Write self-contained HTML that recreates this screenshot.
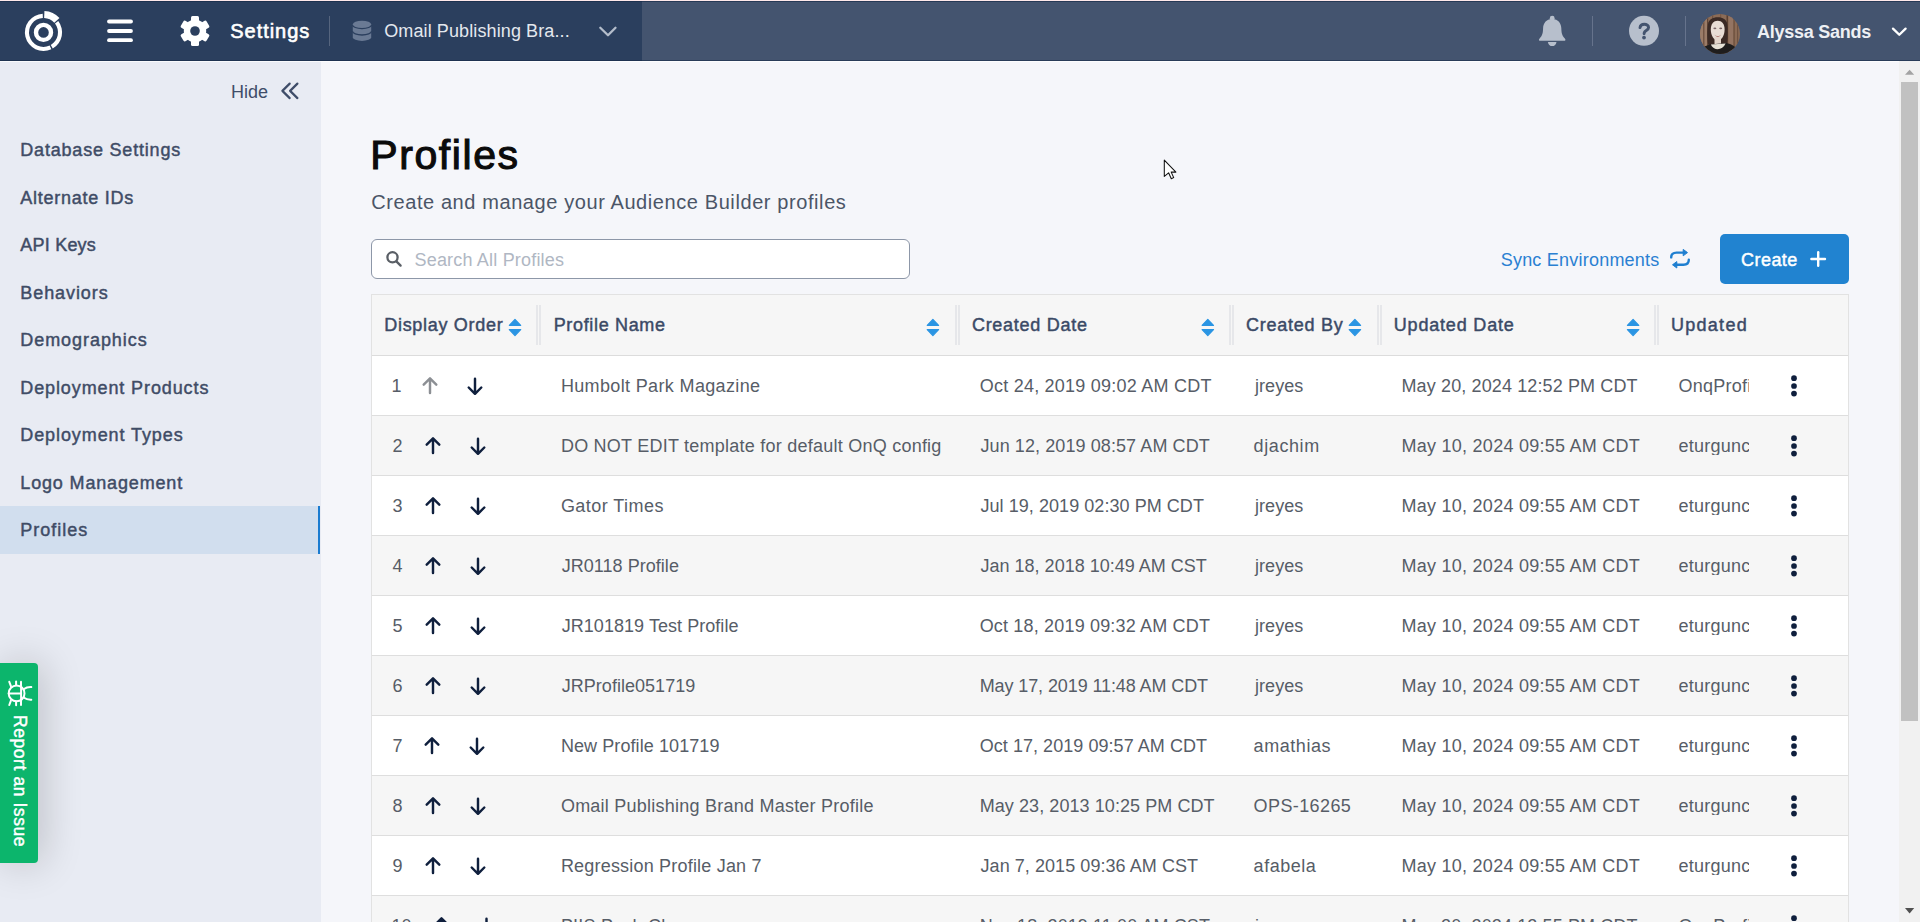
<!DOCTYPE html>
<html><head><meta charset="utf-8"><style>
*{box-sizing:border-box}
html,body{margin:0;padding:0;width:1920px;height:922px;overflow:hidden;background:#f5f6fa;font-family:"Liberation Sans", sans-serif}
.t{position:absolute;white-space:nowrap}
.a{position:absolute}
</style></head><body>
<div class="a" style="left:0;top:0;width:1920px;height:1px;background:#ffe9ea"></div><div class="a" style="left:0;top:1px;width:642px;height:60px;background:#2b3f5e"></div><div class="a" style="left:642px;top:1px;width:1278px;height:60px;background:#44546f"></div><div class="a" style="left:0;top:1px;width:1920px;height:1px;background:rgba(20,40,70,.6)"></div><div class="a" style="left:0;top:60px;width:1920px;height:1px;background:rgba(20,40,70,.55)"></div><div class="a" style="left:0;top:61px;width:321px;height:861px;background:#e8ebf3"></div><div class="a" style="left:0;top:61px;width:1920px;height:1px;background:rgba(255,255,255,.75)"></div><div class="t" style="left:230.3px;top:21.07px;font-size:20px;line-height:20px;color:#fff;font-weight:400;-webkit-text-stroke:0.6px #fff;letter-spacing:0.95px">Settings</div>
<div class="a" style="left:329px;top:16px;width:1px;height:30px;background:#56657e"></div><div class="t" style="left:384.2px;top:21.96px;font-size:18px;line-height:18px;color:#e4e8ee;font-weight:400;letter-spacing:0.11px">Omail Publishing Bra...</div>
<div class="t" style="left:1757px;top:23.06px;font-size:18px;line-height:18px;color:#eef0f4;font-weight:700;letter-spacing:-0.25px">Alyssa Sands</div>
<div class="a" style="left:1592px;top:16px;width:1px;height:30px;background:#66738c"></div><div class="a" style="left:1685px;top:16px;width:1px;height:30px;background:#66738c"></div><div class="t" style="left:231px;top:82.56px;font-size:18px;line-height:18px;color:#3f4d69;font-weight:400;">Hide</div>
<div class="a" style="left:0;top:506px;width:320px;height:48px;background:#d1deee"></div><div class="a" style="left:318px;top:506px;width:2px;height:48px;background:#1a7bd0"></div><div class="t" style="left:20.3px;top:141.06px;font-size:18px;line-height:18px;color:#3f4c66;font-weight:400;-webkit-text-stroke:0.45px #3f4c66;letter-spacing:0.8px">Database Settings</div>
<div class="t" style="left:20.3px;top:188.56px;font-size:18px;line-height:18px;color:#3f4c66;font-weight:400;-webkit-text-stroke:0.45px #3f4c66;letter-spacing:0.75px">Alternate IDs</div>
<div class="t" style="left:20.3px;top:236.06px;font-size:18px;line-height:18px;color:#3f4c66;font-weight:400;-webkit-text-stroke:0.45px #3f4c66;letter-spacing:0.214px">API Keys</div>
<div class="t" style="left:20.3px;top:283.56px;font-size:18px;line-height:18px;color:#3f4c66;font-weight:400;-webkit-text-stroke:0.45px #3f4c66;letter-spacing:0.912px">Behaviors</div>
<div class="t" style="left:20.3px;top:331.06px;font-size:18px;line-height:18px;color:#3f4c66;font-weight:400;-webkit-text-stroke:0.45px #3f4c66;letter-spacing:0.936px">Demographics</div>
<div class="t" style="left:20.3px;top:378.56px;font-size:18px;line-height:18px;color:#3f4c66;font-weight:400;-webkit-text-stroke:0.45px #3f4c66;letter-spacing:0.889px">Deployment Products</div>
<div class="t" style="left:20.3px;top:426.06px;font-size:18px;line-height:18px;color:#3f4c66;font-weight:400;-webkit-text-stroke:0.45px #3f4c66;letter-spacing:0.907px">Deployment Types</div>
<div class="t" style="left:20.3px;top:473.56px;font-size:18px;line-height:18px;color:#3f4c66;font-weight:400;-webkit-text-stroke:0.45px #3f4c66;letter-spacing:0.843px">Logo Management</div>
<div class="t" style="left:20.3px;top:521.06px;font-size:18px;line-height:18px;color:#3f4c66;font-weight:400;-webkit-text-stroke:0.45px #3f4c66;letter-spacing:1.0px">Profiles</div>
<div class="t" style="left:370.3px;top:135.09px;font-size:41px;line-height:41px;color:#0b0b0b;font-weight:400;-webkit-text-stroke:1.1px #0b0b0b;letter-spacing:1.571px">Profiles</div>
<div class="t" style="left:371.2px;top:191.87px;font-size:20px;line-height:20px;color:#4b5567;font-weight:400;letter-spacing:0.59px">Create and manage your Audience Builder profiles</div>
<div class="a" style="left:371px;top:239px;width:539px;height:40px;background:#fff;border:1px solid #8d97a8;border-radius:6px"></div><div class="t" style="left:414.5px;top:251.06px;font-size:18px;line-height:18px;color:#b0b7c3;font-weight:400;letter-spacing:0.19px">Search All Profiles</div>
<div class="t" style="left:1500.7px;top:250.96px;font-size:18px;line-height:18px;color:#2a80d2;font-weight:400;letter-spacing:0.22px">Sync Environments</div>
<div class="a" style="left:1720px;top:234px;width:129px;height:50px;background:#2183d0;border-radius:5px"></div><div class="t" style="left:1741px;top:250.96px;font-size:18px;line-height:18px;color:#fff;font-weight:400;-webkit-text-stroke:0.45px #fff;letter-spacing:0.46px">Create</div>
<div class="a" style="left:371px;top:294px;width:1478px;height:700px;background:#fff;border:1px solid #e2e2e2"></div><div class="a" style="left:372px;top:295px;width:1476px;height:60px;background:#f6f6f6"></div><div class="a" style="left:372px;top:355px;width:1476px;height:1px;background:#dcdcdc"></div><div class="a" style="left:372px;top:356px;width:1476px;height:59px;background:#fff"></div><div class="a" style="left:372px;top:415px;width:1476px;height:1px;background:#dedede"></div><div class="t" style="left:391.5px;top:376.56px;font-size:18px;line-height:18px;color:#575d67;font-weight:400;">1</div>
<div class="t" style="left:560.9px;top:376.56px;font-size:18px;line-height:18px;color:#575d67;font-weight:400;letter-spacing:0.355px">Humbolt Park Magazine</div>
<div class="t" style="left:979.7px;top:376.56px;font-size:18px;line-height:18px;color:#575d67;font-weight:400;letter-spacing:0.237px">Oct 24, 2019 09:02 AM CDT</div>
<div class="t" style="left:1255.0px;top:376.56px;font-size:18px;line-height:18px;color:#575d67;font-weight:400;letter-spacing:0.06px">jreyes</div>
<div class="t" style="left:1401.5px;top:376.56px;font-size:18px;line-height:18px;color:#575d67;font-weight:400;letter-spacing:0.125px">May 20, 2024 12:52 PM CDT</div>
<div class="t" style="left:1678.5px;top:376.56px;font-size:18px;line-height:18px;color:#575d67;font-weight:400;width:70.5px;overflow:hidden;letter-spacing:0.25px">OnqProfi</div>
<div class="a" style="left:372px;top:416px;width:1476px;height:59px;background:#f6f6f6"></div><div class="a" style="left:372px;top:475px;width:1476px;height:1px;background:#dedede"></div><div class="t" style="left:392.5px;top:436.56px;font-size:18px;line-height:18px;color:#575d67;font-weight:400;">2</div>
<div class="t" style="left:560.9px;top:436.56px;font-size:18px;line-height:18px;color:#575d67;font-weight:400;letter-spacing:0.238px">DO NOT EDIT template for default OnQ config</div>
<div class="t" style="left:980.5px;top:436.56px;font-size:18px;line-height:18px;color:#575d67;font-weight:400;letter-spacing:0.087px">Jun 12, 2019 08:57 AM CDT</div>
<div class="t" style="left:1253.6px;top:436.56px;font-size:18px;line-height:18px;color:#575d67;font-weight:400;letter-spacing:0.6px">djachim</div>
<div class="t" style="left:1401.5px;top:436.56px;font-size:18px;line-height:18px;color:#575d67;font-weight:400;letter-spacing:0.258px">May 10, 2024 09:55 AM CDT</div>
<div class="t" style="left:1678.5px;top:436.56px;font-size:18px;line-height:18px;color:#575d67;font-weight:400;width:70.5px;overflow:hidden;letter-spacing:0.25px">eturgunc</div>
<div class="a" style="left:372px;top:476px;width:1476px;height:59px;background:#fff"></div><div class="a" style="left:372px;top:535px;width:1476px;height:1px;background:#dedede"></div><div class="t" style="left:392.5px;top:496.56px;font-size:18px;line-height:18px;color:#575d67;font-weight:400;">3</div>
<div class="t" style="left:560.9px;top:496.56px;font-size:18px;line-height:18px;color:#575d67;font-weight:400;letter-spacing:0.45px">Gator Times</div>
<div class="t" style="left:980.5px;top:496.56px;font-size:18px;line-height:18px;color:#575d67;font-weight:400;letter-spacing:0.054px">Jul 19, 2019 02:30 PM CDT</div>
<div class="t" style="left:1255.0px;top:496.56px;font-size:18px;line-height:18px;color:#575d67;font-weight:400;letter-spacing:0.06px">jreyes</div>
<div class="t" style="left:1401.5px;top:496.56px;font-size:18px;line-height:18px;color:#575d67;font-weight:400;letter-spacing:0.258px">May 10, 2024 09:55 AM CDT</div>
<div class="t" style="left:1678.5px;top:496.56px;font-size:18px;line-height:18px;color:#575d67;font-weight:400;width:70.5px;overflow:hidden;letter-spacing:0.25px">eturgunc</div>
<div class="a" style="left:372px;top:536px;width:1476px;height:59px;background:#f6f6f6"></div><div class="a" style="left:372px;top:595px;width:1476px;height:1px;background:#dedede"></div><div class="t" style="left:392.5px;top:556.56px;font-size:18px;line-height:18px;color:#575d67;font-weight:400;">4</div>
<div class="t" style="left:561.6999999999999px;top:556.56px;font-size:18px;line-height:18px;color:#575d67;font-weight:400;letter-spacing:0.038px">JR0118 Profile</div>
<div class="t" style="left:980.5px;top:556.56px;font-size:18px;line-height:18px;color:#575d67;font-weight:400;letter-spacing:0.008px">Jan 18, 2018 10:49 AM CST</div>
<div class="t" style="left:1255.0px;top:556.56px;font-size:18px;line-height:18px;color:#575d67;font-weight:400;letter-spacing:0.06px">jreyes</div>
<div class="t" style="left:1401.5px;top:556.56px;font-size:18px;line-height:18px;color:#575d67;font-weight:400;letter-spacing:0.258px">May 10, 2024 09:55 AM CDT</div>
<div class="t" style="left:1678.5px;top:556.56px;font-size:18px;line-height:18px;color:#575d67;font-weight:400;width:70.5px;overflow:hidden;letter-spacing:0.25px">eturgunc</div>
<div class="a" style="left:372px;top:596px;width:1476px;height:59px;background:#fff"></div><div class="a" style="left:372px;top:655px;width:1476px;height:1px;background:#dedede"></div><div class="t" style="left:392.5px;top:616.56px;font-size:18px;line-height:18px;color:#575d67;font-weight:400;">5</div>
<div class="t" style="left:561.6999999999999px;top:616.56px;font-size:18px;line-height:18px;color:#575d67;font-weight:400;letter-spacing:0.05px">JR101819 Test Profile</div>
<div class="t" style="left:979.7px;top:616.56px;font-size:18px;line-height:18px;color:#575d67;font-weight:400;letter-spacing:0.171px">Oct 18, 2019 09:32 AM CDT</div>
<div class="t" style="left:1255.0px;top:616.56px;font-size:18px;line-height:18px;color:#575d67;font-weight:400;letter-spacing:0.06px">jreyes</div>
<div class="t" style="left:1401.5px;top:616.56px;font-size:18px;line-height:18px;color:#575d67;font-weight:400;letter-spacing:0.258px">May 10, 2024 09:55 AM CDT</div>
<div class="t" style="left:1678.5px;top:616.56px;font-size:18px;line-height:18px;color:#575d67;font-weight:400;width:70.5px;overflow:hidden;letter-spacing:0.25px">eturgunc</div>
<div class="a" style="left:372px;top:656px;width:1476px;height:59px;background:#f6f6f6"></div><div class="a" style="left:372px;top:715px;width:1476px;height:1px;background:#dedede"></div><div class="t" style="left:392.5px;top:676.56px;font-size:18px;line-height:18px;color:#575d67;font-weight:400;">6</div>
<div class="t" style="left:561.6999999999999px;top:676.56px;font-size:18px;line-height:18px;color:#575d67;font-weight:400;letter-spacing:0.036px">JRProfile051719</div>
<div class="t" style="left:979.7px;top:676.56px;font-size:18px;line-height:18px;color:#575d67;font-weight:400;letter-spacing:-0.1px">May 17, 2019 11:48 AM CDT</div>
<div class="t" style="left:1255.0px;top:676.56px;font-size:18px;line-height:18px;color:#575d67;font-weight:400;letter-spacing:0.06px">jreyes</div>
<div class="t" style="left:1401.5px;top:676.56px;font-size:18px;line-height:18px;color:#575d67;font-weight:400;letter-spacing:0.258px">May 10, 2024 09:55 AM CDT</div>
<div class="t" style="left:1678.5px;top:676.56px;font-size:18px;line-height:18px;color:#575d67;font-weight:400;width:70.5px;overflow:hidden;letter-spacing:0.25px">eturgunc</div>
<div class="a" style="left:372px;top:716px;width:1476px;height:59px;background:#fff"></div><div class="a" style="left:372px;top:775px;width:1476px;height:1px;background:#dedede"></div><div class="t" style="left:392.5px;top:736.56px;font-size:18px;line-height:18px;color:#575d67;font-weight:400;">7</div>
<div class="t" style="left:560.9px;top:736.56px;font-size:18px;line-height:18px;color:#575d67;font-weight:400;letter-spacing:0.088px">New Profile 101719</div>
<div class="t" style="left:979.7px;top:736.56px;font-size:18px;line-height:18px;color:#575d67;font-weight:400;letter-spacing:0.05px">Oct 17, 2019 09:57 AM CDT</div>
<div class="t" style="left:1253.6px;top:736.56px;font-size:18px;line-height:18px;color:#575d67;font-weight:400;letter-spacing:0.557px">amathias</div>
<div class="t" style="left:1401.5px;top:736.56px;font-size:18px;line-height:18px;color:#575d67;font-weight:400;letter-spacing:0.258px">May 10, 2024 09:55 AM CDT</div>
<div class="t" style="left:1678.5px;top:736.56px;font-size:18px;line-height:18px;color:#575d67;font-weight:400;width:70.5px;overflow:hidden;letter-spacing:0.25px">eturgunc</div>
<div class="a" style="left:372px;top:776px;width:1476px;height:59px;background:#f6f6f6"></div><div class="a" style="left:372px;top:835px;width:1476px;height:1px;background:#dedede"></div><div class="t" style="left:392.5px;top:796.56px;font-size:18px;line-height:18px;color:#575d67;font-weight:400;">8</div>
<div class="t" style="left:560.9px;top:796.56px;font-size:18px;line-height:18px;color:#575d67;font-weight:400;letter-spacing:0.236px">Omail Publishing Brand Master Profile</div>
<div class="t" style="left:979.7px;top:796.56px;font-size:18px;line-height:18px;color:#575d67;font-weight:400;letter-spacing:0.075px">May 23, 2013 10:25 PM CDT</div>
<div class="t" style="left:1253.6px;top:796.56px;font-size:18px;line-height:18px;color:#575d67;font-weight:400;letter-spacing:0.4px">OPS-16265</div>
<div class="t" style="left:1401.5px;top:796.56px;font-size:18px;line-height:18px;color:#575d67;font-weight:400;letter-spacing:0.258px">May 10, 2024 09:55 AM CDT</div>
<div class="t" style="left:1678.5px;top:796.56px;font-size:18px;line-height:18px;color:#575d67;font-weight:400;width:70.5px;overflow:hidden;letter-spacing:0.25px">eturgunc</div>
<div class="a" style="left:372px;top:836px;width:1476px;height:59px;background:#fff"></div><div class="a" style="left:372px;top:895px;width:1476px;height:1px;background:#dedede"></div><div class="t" style="left:392.5px;top:856.56px;font-size:18px;line-height:18px;color:#575d67;font-weight:400;">9</div>
<div class="t" style="left:560.9px;top:856.56px;font-size:18px;line-height:18px;color:#575d67;font-weight:400;letter-spacing:0.196px">Regression Profile Jan 7</div>
<div class="t" style="left:980.5px;top:856.56px;font-size:18px;line-height:18px;color:#575d67;font-weight:400;letter-spacing:0.061px">Jan 7, 2015 09:36 AM CST</div>
<div class="t" style="left:1253.6px;top:856.56px;font-size:18px;line-height:18px;color:#575d67;font-weight:400;letter-spacing:0.533px">afabela</div>
<div class="t" style="left:1401.5px;top:856.56px;font-size:18px;line-height:18px;color:#575d67;font-weight:400;letter-spacing:0.258px">May 10, 2024 09:55 AM CDT</div>
<div class="t" style="left:1678.5px;top:856.56px;font-size:18px;line-height:18px;color:#575d67;font-weight:400;width:70.5px;overflow:hidden;letter-spacing:0.25px">eturgunc</div>
<div class="a" style="left:372px;top:896px;width:1476px;height:59px;background:#f6f6f6"></div><div class="a" style="left:372px;top:955px;width:1476px;height:1px;background:#dedede"></div><div class="t" style="left:391.5px;top:916.56px;font-size:18px;line-height:18px;color:#575d67;font-weight:400;">10</div>
<div class="t" style="left:560.9px;top:916.56px;font-size:18px;line-height:18px;color:#575d67;font-weight:400;letter-spacing:0.2px">PIIS Push Change</div>
<div class="t" style="left:979.7px;top:916.56px;font-size:18px;line-height:18px;color:#575d67;font-weight:400;letter-spacing:0.1px">Nov 18, 2019 11:00 AM CST</div>
<div class="t" style="left:1255.0px;top:916.56px;font-size:18px;line-height:18px;color:#575d67;font-weight:400;letter-spacing:0.06px">jreyes</div>
<div class="t" style="left:1401.5px;top:916.56px;font-size:18px;line-height:18px;color:#575d67;font-weight:400;letter-spacing:0.125px">May 20, 2024 12:55 PM CDT</div>
<div class="t" style="left:1678.5px;top:916.56px;font-size:18px;line-height:18px;color:#575d67;font-weight:400;width:70.5px;overflow:hidden;letter-spacing:0.25px">OnqProfile</div>
<div class="t" style="left:384.3px;top:316.01px;font-size:18px;line-height:18px;color:#3b4a66;font-weight:400;-webkit-text-stroke:0.45px #3b4a66;letter-spacing:0.692px">Display Order</div>
<div class="t" style="left:553.7px;top:316.01px;font-size:18px;line-height:18px;color:#3b4a66;font-weight:400;-webkit-text-stroke:0.45px #3b4a66;letter-spacing:0.664px">Profile Name</div>
<div class="t" style="left:971.9px;top:316.01px;font-size:18px;line-height:18px;color:#3b4a66;font-weight:400;-webkit-text-stroke:0.45px #3b4a66;letter-spacing:0.736px">Created Date</div>
<div class="t" style="left:1245.9px;top:316.01px;font-size:18px;line-height:18px;color:#3b4a66;font-weight:400;-webkit-text-stroke:0.45px #3b4a66;letter-spacing:0.75px">Created By</div>
<div class="t" style="left:1393.8px;top:316.01px;font-size:18px;line-height:18px;color:#3b4a66;font-weight:400;-webkit-text-stroke:0.45px #3b4a66;letter-spacing:0.809px">Updated Date</div>
<div class="t" style="left:1670.9px;top:316.01px;font-size:18px;line-height:18px;color:#3b4a66;font-weight:400;-webkit-text-stroke:0.45px #3b4a66;letter-spacing:1.3px">Updated</div>
<div class="a" style="left:536px;top:305px;width:2px;height:40px;background:#e6e7ea"></div><div class="a" style="left:539px;top:305px;width:2px;height:40px;background:#e6e7ea"></div><div class="a" style="left:955px;top:305px;width:2px;height:40px;background:#e6e7ea"></div><div class="a" style="left:958px;top:305px;width:2px;height:40px;background:#e6e7ea"></div><div class="a" style="left:1229px;top:305px;width:2px;height:40px;background:#e6e7ea"></div><div class="a" style="left:1232px;top:305px;width:2px;height:40px;background:#e6e7ea"></div><div class="a" style="left:1377px;top:305px;width:2px;height:40px;background:#e6e7ea"></div><div class="a" style="left:1380px;top:305px;width:2px;height:40px;background:#e6e7ea"></div><div class="a" style="left:1654px;top:305px;width:2px;height:40px;background:#e6e7ea"></div><div class="a" style="left:1657px;top:305px;width:2px;height:40px;background:#e6e7ea"></div><div class="a" style="left:0;top:663px;width:38px;height:200px;background:#0cb56c;border-radius:0 4px 4px 0;box-shadow:4px 0 40px rgba(0,0,0,.2)"></div><div class="t" style="left:27.8px;top:715px;transform-origin:0 0;transform:rotate(90deg);font-size:17.5px;line-height:17.5px;color:#fff;font-weight:400;-webkit-text-stroke:0.45px #fff;letter-spacing:0.571px">Report an Issue</div><div class="a" style="left:1899px;top:61px;width:21px;height:861px;background:#f1f1f1"></div><div class="a" style="left:1901px;top:82px;width:17px;height:639px;background:#c1c1c1"></div><svg class="a" style="left:0;top:0" width="1920" height="922" viewBox="0 0 1920 922"><circle cx="43.5" cy="32.4" r="7.5" fill="none" stroke="#fff" stroke-width="4.4"/><path fill="#fff" d="M44.44 10.92 A21.5 21.5 0 0 1 59.48 18.01 L54.28 22.70 A14.5 14.5 0 0 0 44.13 17.91 Z M58.26 21.08 A18.6 18.6 0 0 1 52.80 48.51 L50.75 44.96 A14.5 14.5 0 0 0 55.00 23.57 Z M51.36 49.26 A18.6 18.6 0 1 1 42.69 13.82 L42.87 17.91 A14.5 14.5 0 1 0 49.63 45.54 Z"/><g stroke="#fff" stroke-width="3.8" stroke-linecap="round"><line x1="109" y1="21.5" x2="131" y2="21.5"/><line x1="109" y1="31" x2="131" y2="31"/><line x1="109" y1="40.2" x2="131" y2="40.2"/></g><g transform="translate(195,31)" fill="#fff"><circle r="11.2"/><rect x="-4" y="-14.9" width="8" height="7.9" rx="1.5" transform="rotate(0)"/><rect x="-4" y="-14.9" width="8" height="7.9" rx="1.5" transform="rotate(60)"/><rect x="-4" y="-14.9" width="8" height="7.9" rx="1.5" transform="rotate(120)"/><rect x="-4" y="-14.9" width="8" height="7.9" rx="1.5" transform="rotate(180)"/><rect x="-4" y="-14.9" width="8" height="7.9" rx="1.5" transform="rotate(240)"/><rect x="-4" y="-14.9" width="8" height="7.9" rx="1.5" transform="rotate(300)"/><circle r="4.8" fill="#2b3f5e"/></g><g fill="#6a7a94"><path d="M352.8 24.4 A9.2 3.6 0 0 1 371.2 24.4 L371.2 37.3 A9.2 3.6 0 0 1 352.8 37.3 Z"/></g><g fill="none" stroke="#2b3f5e" stroke-width="1.3"><path d="M352.5 24.9 A9.5 3.7 0 0 0 371.5 24.9"/><path d="M352.5 31.3 A9.5 3.7 0 0 0 371.5 31.3"/></g><path d="M600.3 27.7 L608 35.3 L615.5 27.7" fill="none" stroke="#b4bdcb" stroke-width="2.3" stroke-linecap="round" stroke-linejoin="round"/><g fill="#b7bfcc"><circle cx="1552.2" cy="18.2" r="2.4"/><path d="M1552.2 19 C1546 19 1543.3 23.5 1543.1 28 C1542.9 33 1542.6 35.2 1539.6 38.4 C1538.3 39.8 1539 40.8 1540.5 40.8 L1563.9 40.8 C1565.4 40.8 1566.1 39.8 1564.8 38.4 C1561.8 35.2 1561.5 33 1561.3 28 C1561.1 23.5 1558.4 19 1552.2 19 Z"/><path d="M1547.9 41.9 L1556.5 41.9 C1556.2 44.6 1554.4 46.1 1552.2 46.1 C1550 46.1 1548.2 44.6 1547.9 41.9 Z"/></g><circle cx="1644" cy="30.8" r="15" fill="#b7bfcc"/><path d="M1640 27.6 C1640.3 25.4 1642 24.3 1644.3 24.3 C1646.8 24.3 1648.6 25.8 1648.6 27.5 C1648.6 29.7 1646.3 30.3 1644.9 31.6 C1644.3 32.2 1644.1 32.8 1644.1 33.7" fill="none" stroke="#44546f" stroke-width="2.9" stroke-linecap="round"/><circle cx="1644" cy="37.6" r="1.9" fill="#44546f"/><defs><clipPath id="av"><circle cx="1720" cy="33.9" r="20"/></clipPath></defs><g clip-path="url(#av)"><rect x="1700" y="13" width="40" height="42" fill="#8b6b56"/><rect x="1700" y="13" width="8" height="42" fill="#9b7c68"/><rect x="1703.2" y="13" width="1.2" height="42" fill="#6a4d3c"/><rect x="1707" y="13" width="1.2" height="42" fill="#5f4435"/><rect x="1712" y="13" width="1.2" height="42" fill="#6f5241"/><rect x="1720" y="13" width="1.2" height="42" fill="#7a5a47"/><rect x="1726.5" y="13" width="1.5" height="42" fill="#5b3f30"/><rect x="1729" y="13" width="4" height="42" fill="#947462"/><rect x="1733.5" y="13" width="1.2" height="42" fill="#6b4e3c"/><rect x="1737" y="13" width="1.2" height="42" fill="#6f5241"/><path d="M1708.5 46 C1707 40 1707 30 1708 24 C1709 19.5 1712.5 17.3 1717.8 17.3 C1723 17.3 1726.3 19.5 1727.2 24 C1728 30 1727.8 40 1726.5 46 Z" fill="#3b2a25"/><path d="M1717.7 20.8 C1721.8 20.8 1724.6 24 1724.6 29.5 C1724.6 35.5 1721.6 40.3 1717.7 40.3 C1713.8 40.3 1710.8 35.5 1710.8 29.5 C1710.8 24 1713.6 20.8 1717.7 20.8 Z" fill="#e8ddd5"/><rect x="1714.5" y="37" width="6.5" height="8" fill="#e3d5cb"/><ellipse cx="1714.9" cy="28.4" rx="1.5" ry="0.8" fill="#7b6668"/><ellipse cx="1720.7" cy="28.4" rx="1.5" ry="0.8" fill="#7b6668"/><path d="M1714.4 34.6 C1716.4 36.6 1719.2 36.6 1721.2 34.6 C1719.6 37.8 1716.2 37.8 1714.4 34.6 Z" fill="#b27b73"/><path d="M1696 58 C1698 50 1703 46.3 1710 44.6 L1726 43 C1733 44.5 1738 47.5 1744 58 Z" fill="#1f1d1d"/><path d="M1710.8 44.6 C1713.5 51 1722.5 51 1725.6 43.6 Z" fill="#e6e1d6"/></g><path d="M1893 28.6 L1899.3 34.8 L1905.6 28.6" fill="none" stroke="#fff" stroke-width="2.3" stroke-linecap="round" stroke-linejoin="round"/><g fill="none" stroke="#3f4d69" stroke-width="2.2" stroke-linecap="round" stroke-linejoin="round"><path d="M289.7 83.6 L282.4 90.9 L289.7 98.1"/><path d="M297.4 83.6 L290.1 90.9 L297.4 98.1"/></g><g fill="none" stroke="#5a5f66" stroke-width="2.3" stroke-linecap="round"><circle cx="392.5" cy="257.3" r="5.1"/><line x1="396.6" y1="261.6" x2="400.6" y2="265.6"/></g><g fill="none" stroke="#1f7fd0" stroke-width="2.4" stroke-linecap="round"><path d="M1671.2 257.4 C1671.2 254.3 1673 252.6 1676.5 252.6 L1684 252.6"/><path d="M1688.8 259.8 C1688.8 262.9 1687 264.8 1683.5 264.8 L1676 264.8"/></g><g fill="#1f7fd0"><path d="M1683.2 249.4 L1687.5 252.6 L1683.2 255.8 Z" stroke="#1f7fd0" stroke-width="1" stroke-linejoin="round"/><path d="M1676.8 261.6 L1672.5 264.8 L1676.8 268 Z" stroke="#1f7fd0" stroke-width="1" stroke-linejoin="round"/></g><g stroke="#fff" stroke-width="2.4" stroke-linecap="round"><line x1="1818.2" y1="252.2" x2="1818.2" y2="265.8"/><line x1="1811.4" y1="259" x2="1825" y2="259"/></g><g fill="#2b95e3" stroke="#2b95e3" stroke-width="1.2" stroke-linejoin="round"><path d="M509.3 325.3 L515.0 319.5 L520.7 325.3 Z"/><path d="M509.3 329.5 L515.0 335.6 L520.7 329.5 Z"/></g><g fill="#2b95e3" stroke="#2b95e3" stroke-width="1.2" stroke-linejoin="round"><path d="M927.2 325.3 L932.9 319.5 L938.6 325.3 Z"/><path d="M927.2 329.5 L932.9 335.6 L938.6 329.5 Z"/></g><g fill="#2b95e3" stroke="#2b95e3" stroke-width="1.2" stroke-linejoin="round"><path d="M1202.1 325.3 L1207.8 319.5 L1213.5 325.3 Z"/><path d="M1202.1 329.5 L1207.8 335.6 L1213.5 329.5 Z"/></g><g fill="#2b95e3" stroke="#2b95e3" stroke-width="1.2" stroke-linejoin="round"><path d="M1349.1999999999998 325.3 L1354.8999999999999 319.5 L1360.6 325.3 Z"/><path d="M1349.1999999999998 329.5 L1354.8999999999999 335.6 L1360.6 329.5 Z"/></g><g fill="#2b95e3" stroke="#2b95e3" stroke-width="1.2" stroke-linejoin="round"><path d="M1627.3999999999999 325.3 L1633.1 319.5 L1638.8 325.3 Z"/><path d="M1627.3999999999999 329.5 L1633.1 335.6 L1638.8 329.5 Z"/></g><g fill="none" stroke-width="2.45" stroke-linecap="round" stroke-linejoin="round"><path stroke="#8c8f94" d="M430 378.6 V393.1 M423.7 384.6 L430 378.4 L436.3 384.6"/><path stroke="#0f1f3d" d="M475 378.7 V393.6 M468.7 387.5 L475 393.8 L481.3 387.5"/></g><g fill="#0f1f3d"><circle cx="1794" cy="378.2" r="2.85"/><circle cx="1794" cy="386" r="2.85"/><circle cx="1794" cy="393.6" r="2.85"/></g><g fill="none" stroke-width="2.45" stroke-linecap="round" stroke-linejoin="round"><path stroke="#0f1f3d" d="M433 438.6 V453.1 M426.7 444.6 L433 438.4 L439.3 444.6"/><path stroke="#0f1f3d" d="M478 438.7 V453.6 M471.7 447.5 L478 453.79999999999995 L484.3 447.5"/></g><g fill="#0f1f3d"><circle cx="1794" cy="438.2" r="2.85"/><circle cx="1794" cy="446" r="2.85"/><circle cx="1794" cy="453.6" r="2.85"/></g><g fill="none" stroke-width="2.45" stroke-linecap="round" stroke-linejoin="round"><path stroke="#0f1f3d" d="M433 498.6 V513.1 M426.7 504.6 L433 498.4 L439.3 504.6"/><path stroke="#0f1f3d" d="M478 498.70000000000005 V513.6 M471.7 507.5 L478 513.8 L484.3 507.5"/></g><g fill="#0f1f3d"><circle cx="1794" cy="498.2" r="2.85"/><circle cx="1794" cy="506" r="2.85"/><circle cx="1794" cy="513.6" r="2.85"/></g><g fill="none" stroke-width="2.45" stroke-linecap="round" stroke-linejoin="round"><path stroke="#0f1f3d" d="M433 558.6 V573.1 M426.7 564.6 L433 558.4 L439.3 564.6"/><path stroke="#0f1f3d" d="M478 558.7 V573.6 M471.7 567.5 L478 573.8 L484.3 567.5"/></g><g fill="#0f1f3d"><circle cx="1794" cy="558.2" r="2.85"/><circle cx="1794" cy="566" r="2.85"/><circle cx="1794" cy="573.6" r="2.85"/></g><g fill="none" stroke-width="2.45" stroke-linecap="round" stroke-linejoin="round"><path stroke="#0f1f3d" d="M433 618.6 V633.1 M426.7 624.6 L433 618.4 L439.3 624.6"/><path stroke="#0f1f3d" d="M478 618.7 V633.6 M471.7 627.5 L478 633.8 L484.3 627.5"/></g><g fill="#0f1f3d"><circle cx="1794" cy="618.2" r="2.85"/><circle cx="1794" cy="626" r="2.85"/><circle cx="1794" cy="633.6" r="2.85"/></g><g fill="none" stroke-width="2.45" stroke-linecap="round" stroke-linejoin="round"><path stroke="#0f1f3d" d="M433 678.6 V693.1 M426.7 684.6 L433 678.4 L439.3 684.6"/><path stroke="#0f1f3d" d="M478 678.7 V693.6 M471.7 687.5 L478 693.8 L484.3 687.5"/></g><g fill="#0f1f3d"><circle cx="1794" cy="678.2" r="2.85"/><circle cx="1794" cy="686" r="2.85"/><circle cx="1794" cy="693.6" r="2.85"/></g><g fill="none" stroke-width="2.45" stroke-linecap="round" stroke-linejoin="round"><path stroke="#0f1f3d" d="M432 738.6 V753.1 M425.7 744.6 L432 738.4 L438.3 744.6"/><path stroke="#0f1f3d" d="M477 738.7 V753.6 M470.7 747.5 L477 753.8 L483.3 747.5"/></g><g fill="#0f1f3d"><circle cx="1794" cy="738.2" r="2.85"/><circle cx="1794" cy="746" r="2.85"/><circle cx="1794" cy="753.6" r="2.85"/></g><g fill="none" stroke-width="2.45" stroke-linecap="round" stroke-linejoin="round"><path stroke="#0f1f3d" d="M433 798.6 V813.1 M426.7 804.6 L433 798.4 L439.3 804.6"/><path stroke="#0f1f3d" d="M478 798.7 V813.6 M471.7 807.5 L478 813.8 L484.3 807.5"/></g><g fill="#0f1f3d"><circle cx="1794" cy="798.2" r="2.85"/><circle cx="1794" cy="806" r="2.85"/><circle cx="1794" cy="813.6" r="2.85"/></g><g fill="none" stroke-width="2.45" stroke-linecap="round" stroke-linejoin="round"><path stroke="#0f1f3d" d="M433 858.6 V873.1 M426.7 864.6 L433 858.4 L439.3 864.6"/><path stroke="#0f1f3d" d="M478 858.7 V873.6 M471.7 867.5 L478 873.8 L484.3 867.5"/></g><g fill="#0f1f3d"><circle cx="1794" cy="858.2" r="2.85"/><circle cx="1794" cy="866" r="2.85"/><circle cx="1794" cy="873.6" r="2.85"/></g><g fill="none" stroke-width="2.45" stroke-linecap="round" stroke-linejoin="round"><path stroke="#0f1f3d" d="M441.5 918.6 V933.1 M435.2 924.6 L441.5 918.4 L447.8 924.6"/><path stroke="#0f1f3d" d="M486.5 918.7 V933.6 M480.2 927.5 L486.5 933.8 L492.8 927.5"/></g><g fill="#0f1f3d"><circle cx="1794" cy="918.2" r="2.85"/><circle cx="1794" cy="926" r="2.85"/><circle cx="1794" cy="933.6" r="2.85"/></g><g fill="none" stroke="#fff" stroke-width="2" stroke-linecap="round"><circle cx="16.6" cy="693.4" r="7.9"/><line x1="8.7" y1="693.5" x2="21.1" y2="693.5"/><line x1="21.1" y1="686" x2="21.1" y2="701"/><path d="M24 689 C25.8 687.6 28.3 687 31.3 687.1"/><path d="M24 697.8 C25.8 699.2 28.3 699.8 31.3 699.7"/><line x1="10.9" y1="686.2" x2="9.3" y2="681.8"/><line x1="16.1" y1="685.3" x2="16.1" y2="681.6"/><line x1="21.0" y1="686" x2="21.0" y2="681.8"/><line x1="10.9" y1="700.6" x2="9.3" y2="705"/><line x1="16.1" y1="701.5" x2="16.1" y2="705.2"/><line x1="21.0" y1="700.8" x2="21.0" y2="705"/></g><path d="M1905 74.8 L1909.6 69.7 L1914.2 74.8 Z" fill="#a3a3a3"/><path d="M1905 908 L1909.6 913.6 L1914.2 908 Z" fill="#505050"/><path d="M1164.3 160.1 L1164.3 176.4 L1168.6 172.8 L1171.3 178.7 L1173.7 177.6 L1171.2 172.1 L1175.9 172.1 Z" fill="#fff" stroke="#111" stroke-width="1.05" stroke-linejoin="round"/></svg>
</body></html>
